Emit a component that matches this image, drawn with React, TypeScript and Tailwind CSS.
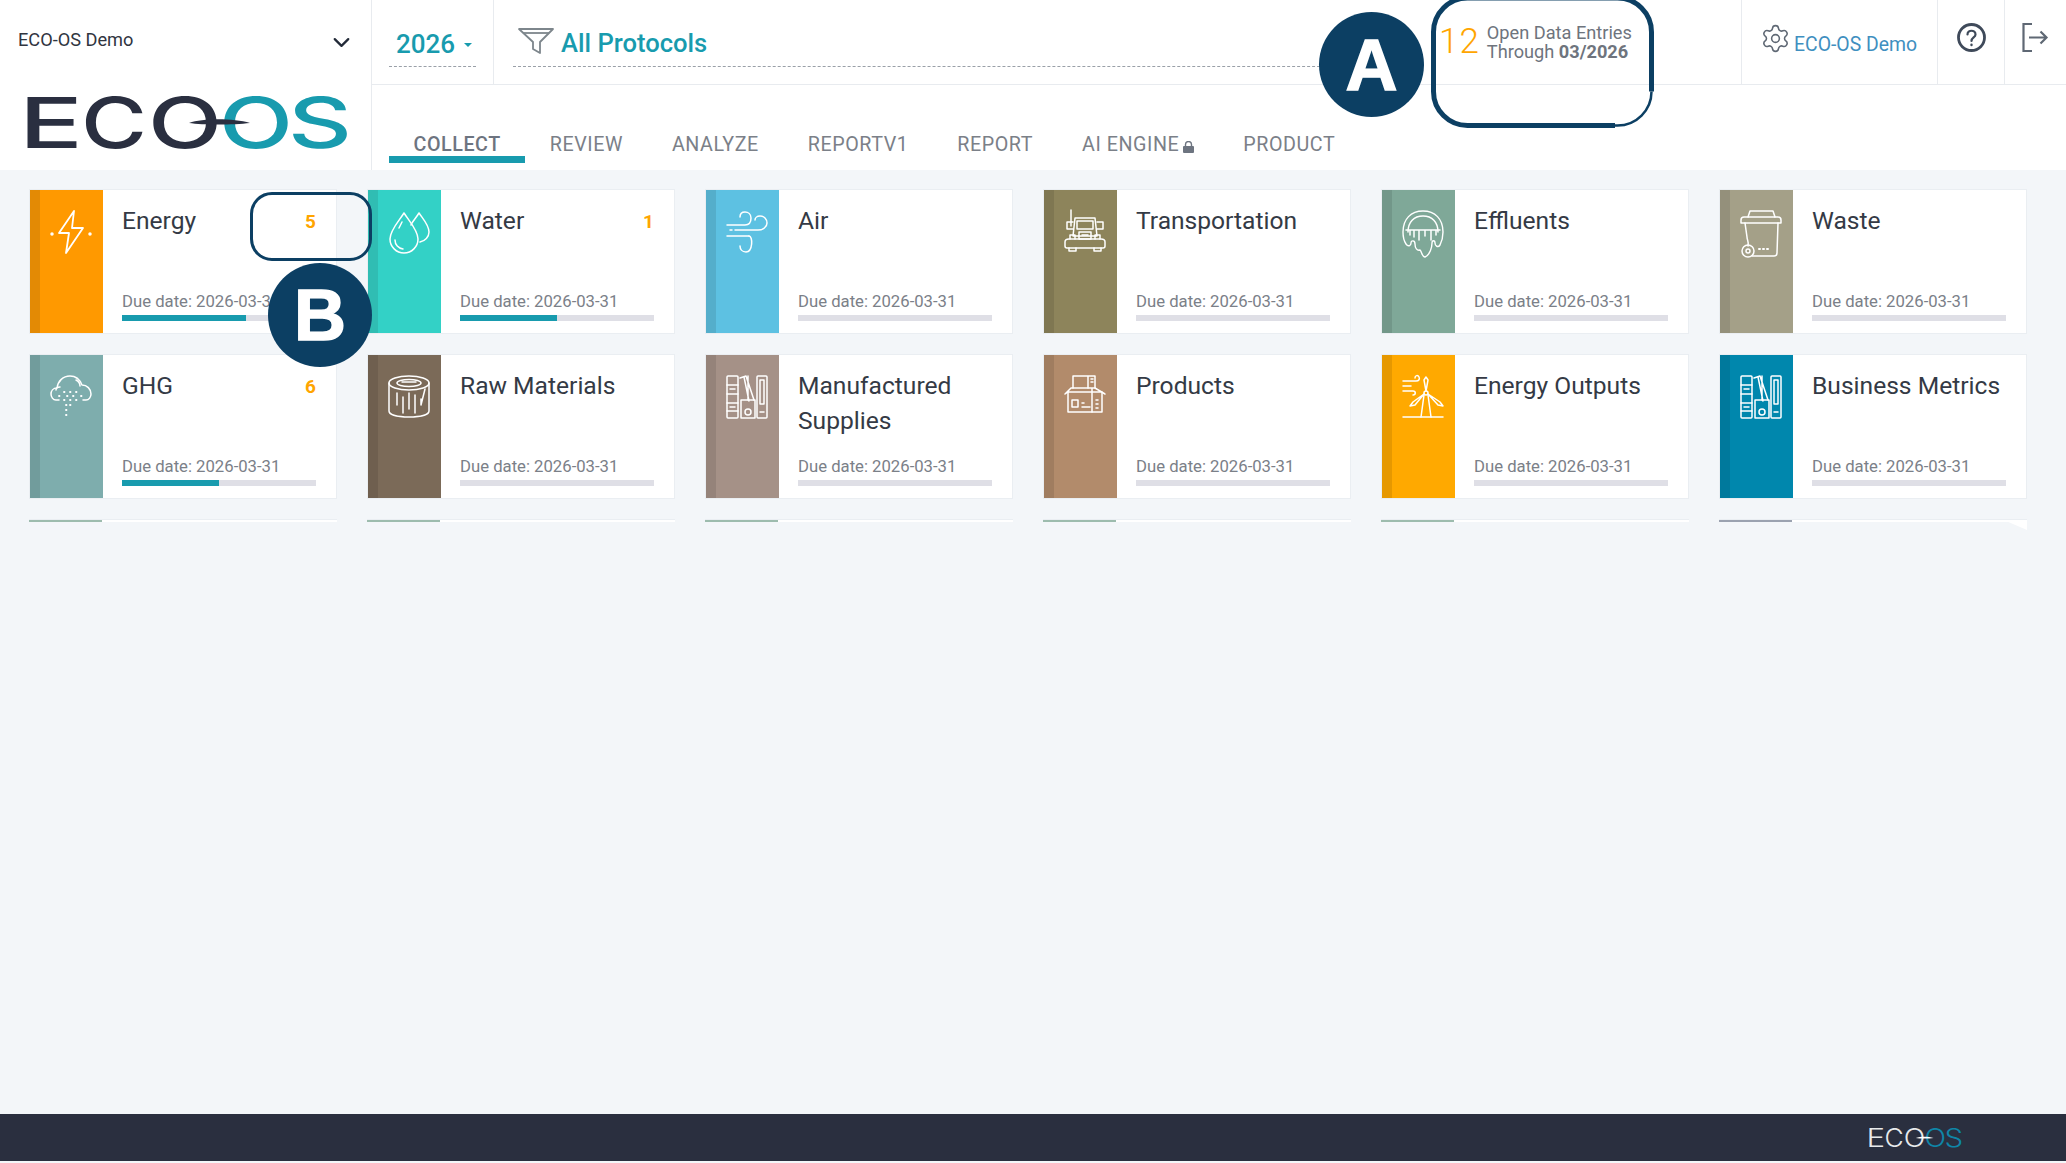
import { ChevronDown, Settings } from 'lucide-react'
import type { ReactNode } from 'react'

const font = { fontFamily: 'Roboto, sans-serif' }

function Icon({ children }: { children: ReactNode }) {
  return (
    <svg viewBox="0 0 42 44" className="w-[42px] h-[44px] overflow-visible" fill="none" stroke="#fff" strokeWidth="1.5" strokeLinecap="round" strokeLinejoin="round">
      {children}
    </svg>
  )
}

const BoltIcon = () => (
  <Icon>
    <path d="M24 1 L9 23 H19 L16 43 L33 18 H22 Z" strokeWidth="1.8" />
    <circle cx="2" cy="24" r="1" fill="#fff" />
    <circle cx="40" cy="24" r="1" fill="#fff" />
  </Icon>
)
const DropsIcon = () => (
  <Icon>
    <path d="M16 3 C11 11 2 20 2 29 a14 14 0 0 0 28 0 C30 20 21 11 16 3 Z" />
    <path d="M31 3 C28 8 24 12 23 15 M31 3 C35 9 41 15 41 22 C41 27 37 31 32 32" />
    <path d="M14 12 L11 18 M7 30 a9 9 0 0 0 8 9" />
  </Icon>
)
const WindIcon = () => (
  <Icon>
    <path d="M1 15 H19 C23 15 25 12 25 8 C25 4 22 2 19 2 C16 2 14 4 14 7" />
    <path d="M9 20 H32 C37 20 41 17 41 13 C41 9 38 6 34 6 C31 6 29 8 29 10" />
    <path d="M1 26 H23" />
    <path d="M23 26 C27 26 27 42 20 42 C16 42 14 39 14 36" />
    <path d="M4 20 H6" />
  </Icon>
)
const TruckIcon = () => (
  <Icon>
    <path d="M7 0 V16 M11 8 H31 L33 26 H9 Z" />
    <rect x="13" y="11" width="16" height="8" />
    <path d="M9 12 H3 V19 H9 M33 12 H39 V19 H33" />
    <path d="M1 32 C1 30 3 29 5 29 H37 C39 29 41 30 41 32 V36 C41 37 40 38 39 38 H3 C2 38 1 37 1 36 Z" />
    <path d="M5 38 V41 H12 V38 M30 38 V41 H37 V38 M15 22 H27 V29 H15 Z M18 25 H24 M6 29 V25 H11 V29 M31 29 V25 H36 V29" />
  </Icon>
)
const JellyIcon = () => (
  <Icon>
    <path d="M1 22 C1 9 9 1 21 1 C33 1 41 9 41 22 C41 27 40 31 38 35 C36 38 33 36 33 33 C33 30 30 30 30 33 C30 37 28 45 23 47 C20 47 20 42 18 40 C15 41 13 38 13 34 C13 30 9 30 9 33 C9 36 6 37 4 34 C2 31 1 27 1 22 Z" strokeWidth="1.4" />
    <path d="M6 22 C6 12 12 6 21 6 C30 6 36 12 36 22" />
    <path d="M4 20 H38 M12 21 V27 M17 21 V30 M23 21 V26 M29 21 V30 M8 21 V25 M34 21 V25" />
  </Icon>
)
const BinIcon = () => (
  <Icon>
    <path d="M1 10 C1 8 2 7 4 7 H38 C40 7 41 8 41 10 V13 H1 Z" />
    <path d="M8 7 L10 1 H33 L35 7" />
    <path d="M5 13 L7 27 C7 30 9 31 8 36" />
    <path d="M38 13 L37 43 C37 45 36 46 34 46 H12" />
    <circle cx="8" cy="41" r="6" />
    <circle cx="8" cy="41" r="2" />
    <path d="M19 39 H20 M23 39 H24 M27 39 H28" strokeWidth="2" />
  </Icon>
)
const CloudIcon = () => (
  <Icon>
    <path d="M9 25 H6 C3 25 1 22 1 19 C1 16 3 13 7 13 C8 6 13 1 20 1 C26 1 30 5 32 10 C37 10 41 14 41 19 C41 22 39 25 36 25 H33" />
    <path d="M6 15 C6 13 8 12 10 12 M26 5 C28 6 30 8 30 11" />
    <path d="M14 17 h.5 M20 17 h.5 M26 17 h.5 M9 21 h.5 M17 21 h.5 M23 21 h.5 M31 21 h.5 M14 25 h.5 M20 25 h.5 M26 25 h.5 M16 30 h.5 M20 30 h.5 M16 35 h.5 M16 40 h.5" strokeWidth="1.8" />
  </Icon>
)
const LogIcon = () => (
  <Icon>
    <ellipse cx="21" cy="8" rx="20" ry="7" />
    <ellipse cx="21" cy="8" rx="12" ry="3.5" />
    <path d="M1 8 V36 C1 40 10 42 21 42 C32 42 41 40 41 36 V8" />
    <path d="M9 18 V30 M15 22 V38 M21 18 V34 M27 20 V38 M33 24 V30 L37 14" />
    <path d="M14 7 H28" />
  </Icon>
)
const BinderIcon = () => (
  <Icon>
    <rect x="1" y="1" width="11" height="42" rx="1" />
    <path d="M1 10 H12 M1 19 H12 M1 28 H12 M1 36 H12 M4 14 H9 M4 32 H9" />
    <path d="M14 3 L20 1 L28 25 M18 2 L23 26 M22 1 V25" />
    <rect x="15" y="25" width="14" height="18" />
    <circle cx="22" cy="37" r="3" />
    <rect x="31" y="1" width="10" height="42" rx="1" />
    <path d="M34 5 H38 V29 H34 Z M34 37 H38" />
  </Icon>
)
const BoxIcon = () => (
  <Icon>
    <path d="M9 13 V1 H31 V13 M24 1 V13 M27 4 H29 M27 7 H29" />
    <path d="M4 17 V37 H38 V17" />
    <path d="M4 17 L1 19 L7 13 H31 L41 19 L38 17 H4 M28 13 V37" />
    <rect x="8" y="25" width="6" height="7" />
    <path d="M18 28 H20 M18 32 H26 M32 25 H34 M32 29 H34 M32 33 H34" />
  </Icon>
)
const TurbineIcon = () => (
  <Icon>
    <path d="M1 42 H41" />
    <path d="M22 20 L19 42 M26 20 L29 42" />
    <path d="M24 16 L22 5 L24 2 L26 5 Z" />
    <path d="M26 19 L38 27 L41 31 L36 30 Z" />
    <path d="M22 19 L11 27 L8 31 L13 30 Z" />
    <circle cx="24" cy="18" r="2" />
    <path d="M1 6 H14 C17 6 18 4 17 2 C16 0 13 0 13 3 M1 11 H9 M1 16 H11 C14 16 14 20 11 20" />
  </Icon>
)

type Card = {
  name: string
  color: string
  strip: string
  icon: ReactNode
  count?: number
  progress?: string
}

const cards: Card[] = [
  { name: 'Energy', color: 'bg-[#ff9900]', strip: 'bg-[#e38a05]', icon: <BoltIcon />, count: 5, progress: 'w-[64%]' },
  { name: 'Water', color: 'bg-[#33d1c6]', strip: 'bg-[#30bdb3]', icon: <DropsIcon />, count: 1, progress: 'w-1/2' },
  { name: 'Air', color: 'bg-[#5dc1e2]', strip: 'bg-[#54aecb]', icon: <WindIcon /> },
  { name: 'Transportation', color: 'bg-[#8d845b]', strip: 'bg-[#7f7752]', icon: <TruckIcon /> },
  { name: 'Effluents', color: 'bg-[#7fa898]', strip: 'bg-[#729789]', icon: <JellyIcon /> },
  { name: 'Waste', color: 'bg-[#a4a088]', strip: 'bg-[#94907b]', icon: <BinIcon /> },
  { name: 'GHG', color: 'bg-[#7eadad]', strip: 'bg-[#719c9c]', icon: <CloudIcon />, count: 6, progress: 'w-1/2' },
  { name: 'Raw Materials', color: 'bg-[#7b6a58]', strip: 'bg-[#6f5f4f]', icon: <LogIcon /> },
  { name: 'Manufactured Supplies', color: 'bg-[#a59187]', strip: 'bg-[#95837a]', icon: <BinderIcon /> },
  { name: 'Products', color: 'bg-[#b28b6b]', strip: 'bg-[#a07d60]', icon: <BoxIcon /> },
  { name: 'Energy Outputs', color: 'bg-[#ffa900]', strip: 'bg-[#e69800]', icon: <TurbineIcon /> },
  { name: 'Business Metrics', color: 'bg-[#0087ad]', strip: 'bg-[#00799c]', icon: <BinderIcon /> },
]

const nextRow = ['bg-[#9dbcae]', 'bg-[#9dbcae]', 'bg-[#9dbcae]', 'bg-[#9dbcae]', 'bg-[#9dbcae]', 'bg-[#9ba2b0]']

const tabs = ['COLLECT', 'REVIEW', 'ANALYZE', 'REPORTV1', 'REPORT', 'AI ENGINE', 'PRODUCT']

function Logo({ className, dark, teal, swoosh, weight }: { className: string; dark: string; teal: string; swoosh: string; weight: number }) {
  const letter = { fontFamily: 'Inter, sans-serif', fontSize: 70, fontWeight: weight }
  return (
    <svg viewBox="0 0 320 50" preserveAspectRatio="none" className={`overflow-visible ${className}`}>
      <text x="-9" y="50" textLength="64" lengthAdjust="spacingAndGlyphs" fill={dark} style={letter}>E</text>
      <text x="53" y="50" textLength="66" lengthAdjust="spacingAndGlyphs" fill={dark} style={letter}>C</text>
      <text x="120" y="50" textLength="74" lengthAdjust="spacingAndGlyphs" fill={dark} style={letter}>O</text>
      <text x="191" y="50" textLength="74" lengthAdjust="spacingAndGlyphs" fill={teal} style={letter}>O</text>
      <text x="260" y="50" textLength="64" lengthAdjust="spacingAndGlyphs" fill={teal} style={letter}>S</text>
      <path d="M161 25 C175 20 205 20 222 25 C205 27 175 27 161 25 Z" fill={swoosh} />
    </svg>
  )
}

function CardItem({ card }: { card: Card }) {
  return (
    <div className="h-[145px] flex bg-white border border-[#eaeef2]">
      <div className={`w-[73px] flex-shrink-0 flex ${card.color}`}>
        <div className={`w-[10px] ${card.strip}`} />
        <div className="pl-[10px] pt-[20px]">{card.icon}</div>
      </div>
      <div className="flex-1 min-w-0 pl-[19px] pr-[20px] flex flex-col">
        <div className="flex justify-between mt-[13px]">
          <div className="text-[24.6px] leading-[35px] text-[#343a45]">{card.name}</div>
          {card.count && <div className="text-[19px] leading-[35px] mt-[1px] font-bold text-[#ffa500]">{card.count}</div>}
        </div>
        <div className="mt-auto text-[16.7px] leading-[20px] text-[#7b8088]">Due date: 2026-03-31</div>
        <div className="mt-[3px] mb-[12px] h-[6px] bg-[#dfdfe6]">
          {card.progress && <div className={`h-full bg-[#189bae] ${card.progress}`} />}
        </div>
      </div>
    </div>
  )
}

export default function App() {
  return (
    <div className="relative w-[2066px] h-[1163px] overflow-hidden bg-[#f3f6f9] flex flex-col" style={font}>
      <header className="h-[170px] bg-white flex flex-shrink-0">
        <div className="w-[372px] flex-shrink-0 border-r border-[#e8ebef]">
          <div className="h-[84px] pl-[18px] pr-[16px] pt-[29px] flex justify-between text-[18.2px] leading-[22px] text-[#30353f]">
            <span>ECO-OS Demo</span>
            <ChevronDown size={27} strokeWidth={2} className="text-[#222a38]" />
          </div>
          <Logo className="ml-[28px] mt-[14px] w-[320px] h-[50px]" dark="#2a2f40" teal="#189bae" swoosh="#2a2f40" weight={500} />
        </div>
        <div className="flex-1 min-w-0 flex flex-col">
          <div className="h-[85px] flex border-b border-[#e8ebef]">
            <div className="w-[122px] border-r border-[#e8ebef] px-[17px] flex-shrink-0">
              <div className="h-[67px] border-b border-dashed border-[#9aa0a8] pt-[26px] pl-[7px] flex items-start text-[26px] leading-[36px] font-medium text-[#189bae]">
                2026
                <span className="ml-[9px] mt-[17px] w-0 h-0 border-x-[4px] border-x-transparent border-t-[4px] border-t-[#189bae]" />
              </div>
            </div>
            <div className="flex-1 min-w-0 pl-[19px] pr-[41px]">
              <div className="h-[67px] border-b border-dashed border-[#9aa0a8] pt-[25px] pl-[5px] flex items-start gap-[7px] text-[25.6px] leading-[36px] font-medium text-[#189bae]">
                <svg width="36" height="26" viewBox="0 0 36 26" fill="none" stroke="#7d868c" strokeWidth="1.8" className="mt-[3px]" strokeLinejoin="round">
                  <path d="M1 1 H35 L22 14 V25 L15 21 V14 Z" />
                  <path d="M5 5 H31" />
                </svg>
                All Protocols
              </div>
            </div>
            <div className="w-[300px] flex-shrink-0 pt-[24px] flex gap-[7px] text-[#6e747d]">
              <span className="text-[35px] leading-[36px] -ml-[2px] font-light text-[#ffa500] tracking-[1px]">12</span>
              <div className="text-[18.2px] leading-[19px] mt-[-1px]">
                <div>Open Data Entries</div>
                <div>Through <b className="font-bold">03/2026</b></div>
              </div>
            </div>
            <div className="w-[197px] flex-shrink-0 border-l border-r border-[#e8ebef] pl-[18px] flex items-start pt-[23px] text-[19.4px] text-[#3f8fc0]">
              <Settings size={31} strokeWidth={1.2} className="text-[#5f6874]" />
              <span className="ml-[3px] mt-[10px] leading-[24px]">ECO-OS Demo</span>
            </div>
            <div className="w-[67px] flex-shrink-0 border-r border-[#e8ebef] flex justify-center pt-[23px]">
              <svg width="29" height="29" viewBox="0 0 29 29" fill="none" stroke="#3f4a5a" strokeWidth="2.8" strokeLinecap="round">
                <circle cx="14.5" cy="14.5" r="13" />
                <path d="M10.5 11.5 C10.5 6.5 18.5 6.5 18.5 11.5 C18.5 14.5 14.5 14.5 14.5 18" strokeWidth="2.2" />
                <path d="M14.5 21.8 v.3" strokeWidth="2.4" />
              </svg>
            </div>
            <div className="w-[61px] flex-shrink-0 flex justify-center pt-[23px]">
              <svg width="27" height="29" viewBox="0 0 27 29" fill="none" stroke="#5f6874" strokeWidth="2.2">
                <path d="M10 1 H1.5 V28 H10" />
                <path d="M7 14.5 H24.5 M18.5 8.5 L24.5 14.5 L18.5 20.5" />
              </svg>
            </div>
          </div>
          <nav className="flex pl-[17px] pt-[40px]">
            {tabs.map((tab, i) => (
              <div
                key={tab}
                className={`h-[38px] px-[24.5px] pt-[8px] text-[19.7px] leading-[24px] tracking-[0.55px] flex items-start gap-[4px] ${
                  i === 0 ? 'font-medium text-[#6d7480] border-b-[7px] border-[#189bae]' : 'text-[#7b8088]'
                }`}
              >
                {tab}
                {tab === 'AI ENGINE' && (
                  <svg width="11" height="12" viewBox="0 0 11 12" className="mt-[8px]" fill="#6d7480">
                    <rect x="0" y="5" width="11" height="7" rx="1" />
                    <path d="M2.5 5 V3.5 a3 3 0 0 1 6 0 V5" fill="none" stroke="#6d7480" strokeWidth="1.4" />
                  </svg>
                )}
              </div>
            ))}
          </nav>
        </div>
      </header>

      <main className="flex-1 min-h-0 pl-[29px] pr-[39px] pt-[19px]">
        <div className="h-[333px] overflow-hidden grid grid-cols-6 gap-x-[30px] gap-y-[20px] content-start">
          {cards.map((card) => (
            <CardItem key={card.name} card={card} />
          ))}
          {nextRow.map((color, i) => (
            <div key={i} className="h-[145px] bg-white border-t border-[#eaeef2] flex">
              <div className={`w-[73px] ${color}`} />
            </div>
          ))}
        </div>
      </main>

      <footer className="h-[47px] mb-[2px] flex-shrink-0 bg-[#2a2f3f] flex justify-end items-center pr-[104px]">
        <Logo className="w-[93px] h-[18px]" dark="#e8eaec" teal="#0f86a8" swoosh="#ffffff" weight={300} />
      </footer>

      {/* clipped corner of the card under the fold */}
      <div className="absolute left-[2006px] top-[521px] w-[21px] h-[9px] bg-white [clip-path:polygon(0_0,100%_0,100%_100%)]" />

      {/* callouts A and B */}
      <div className="absolute left-[1319px] top-[12px] w-[105px] h-[105px] rounded-full bg-[#0c3f63] flex items-center justify-center text-[72px] font-bold text-white [-webkit-text-stroke:1.5px_white]" style={{ fontFamily: '"Liberation Sans", sans-serif' }}>
        A
      </div>
      <svg className="absolute left-[1431px] top-0 overflow-visible" width="223" height="130" fill="none" stroke="#0c3f63">
        <path d="M184 125.5 H36.5 A34 34 0 0 1 2.5 91.5 V32 A34 34 0 0 1 36.5 -2 H186.5 A34 34 0 0 1 220.5 32 V91.5" strokeWidth="5" />
        <path d="M220.5 91.5 A34 34 0 0 1 186.5 125.5 H184" strokeWidth="2.5" />
      </svg>
      <div className="absolute left-[268px] top-[263px] w-[104px] h-[104px] rounded-full bg-[#0c3f63] flex items-center justify-center text-[72px] font-bold text-white [-webkit-text-stroke:1.5px_white]" style={{ fontFamily: '"Liberation Sans", sans-serif' }}>
        B
      </div>
      <div className="absolute left-[250px] top-[192px] w-[122px] h-[69px] rounded-[22px] border-[3px] border-[#0c3f63]" />
    </div>
  )
}
